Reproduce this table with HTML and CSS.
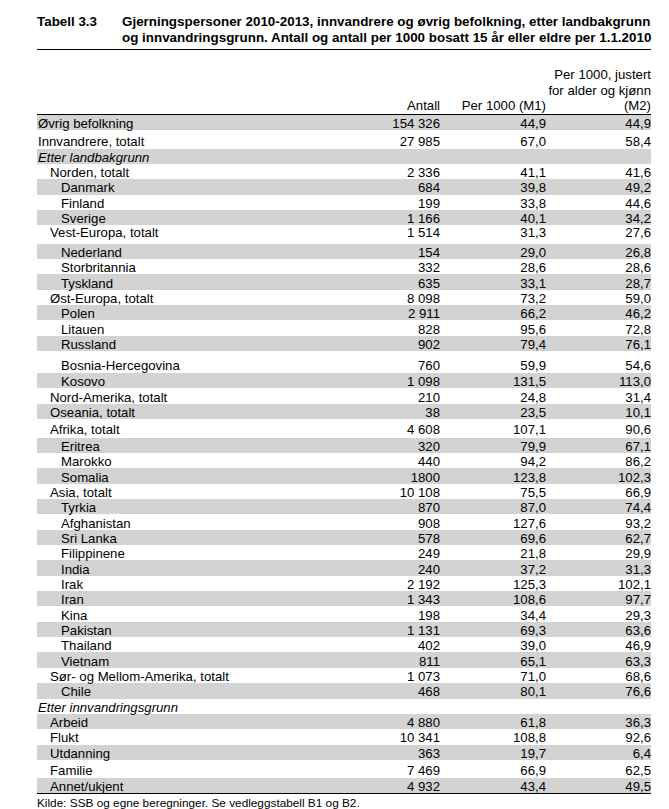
FILE: index.html
```html
<!DOCTYPE html>
<html lang="no">
<head>
<meta charset="utf-8">
<title>Tabell 3.3</title>
<link rel="stylesheet" href="styles.css">
</head>
<body>
<div class="page">
  <div class="title">
    <div class="title-num">Tabell 3.3</div>
    <div class="title-text">Gjerningspersoner 2010-2013, innvandrere og øvrig befolkning, etter landbakgrunn<br>og innvandringsgrunn. Antall og antall per 1000 bosatt 15 år eller eldre per 1.1.2010</div>
  </div>
  <table class="data">
    <colgroup>
      <col class="c-label"><col class="c-antall"><col class="c-m1"><col class="c-m2">
    </colgroup>
    <thead>
      <tr>
        <th class="lab"></th>
        <th>Antall</th>
        <th>Per 1000 (M1)</th>
        <th>Per 1000, justert<br>for alder og kjønn<br>(M2)</th>
      </tr>
    </thead>
    <tbody>
      <tr class="sh r15"><td class="l0">Øvrig befolkning</td><td>154 326</td><td>44,9</td><td>44,9</td></tr>
      <tr class="tall-b h185"><td class="l0">Innvandrere, totalt</td><td>27 985</td><td>67,0</td><td>58,4</td></tr>
      <tr class="sh"><td class="l0 it">Etter landbakgrunn</td><td></td><td></td><td></td></tr>
      <tr><td class="l1">Norden, totalt</td><td>2 336</td><td>41,1</td><td>41,6</td></tr>
      <tr class="sh"><td class="l2">Danmark</td><td>684</td><td>39,8</td><td>49,2</td></tr>
      <tr><td class="l2">Finland</td><td>199</td><td>33,8</td><td>44,6</td></tr>
      <tr class="sh"><td class="l2">Sverige</td><td>1 166</td><td>40,1</td><td>34,2</td></tr>
      <tr class="tall-t h185"><td class="l1">Vest-Europa, totalt</td><td>1 514</td><td>31,3</td><td>27,6</td></tr>
      <tr class="sh"><td class="l2">Nederland</td><td>154</td><td>29,0</td><td>26,8</td></tr>
      <tr><td class="l2">Storbritannia</td><td>332</td><td>28,6</td><td>28,6</td></tr>
      <tr class="sh"><td class="l2">Tyskland</td><td>635</td><td>33,1</td><td>28,7</td></tr>
      <tr><td class="l1">Øst-Europa, totalt</td><td>8 098</td><td>73,2</td><td>59,0</td></tr>
      <tr class="sh"><td class="l2">Polen</td><td>2 911</td><td>66,2</td><td>46,2</td></tr>
      <tr><td class="l2">Litauen</td><td>828</td><td>95,6</td><td>72,8</td></tr>
      <tr class="sh"><td class="l2">Russland</td><td>902</td><td>79,4</td><td>76,1</td></tr>
      <tr class="tall-b h22"><td class="l2">Bosnia-Hercegovina</td><td>760</td><td>59,9</td><td>54,6</td></tr>
      <tr class="sh"><td class="l2">Kosovo</td><td>1 098</td><td>131,5</td><td>113,0</td></tr>
      <tr><td class="l1">Nord-Amerika, totalt</td><td>210</td><td>24,8</td><td>31,4</td></tr>
      <tr class="sh"><td class="l1">Oseania, totalt</td><td>38</td><td>23,5</td><td>10,1</td></tr>
      <tr class="h185"><td class="l1">Afrika, totalt</td><td>4 608</td><td>107,1</td><td>90,6</td></tr>
      <tr class="sh"><td class="l2">Eritrea</td><td>320</td><td>79,9</td><td>67,1</td></tr>
      <tr><td class="l2">Marokko</td><td>440</td><td>94,2</td><td>86,2</td></tr>
      <tr class="sh"><td class="l2">Somalia</td><td>1800</td><td>123,8</td><td>102,3</td></tr>
      <tr><td class="l1">Asia, totalt</td><td>10 108</td><td>75,5</td><td>66,9</td></tr>
      <tr class="sh"><td class="l2">Tyrkia</td><td>870</td><td>87,0</td><td>74,4</td></tr>
      <tr><td class="l2">Afghanistan</td><td>908</td><td>127,6</td><td>93,2</td></tr>
      <tr class="sh"><td class="l2">Sri Lanka</td><td>578</td><td>69,6</td><td>62,7</td></tr>
      <tr><td class="l2">Filippinene</td><td>249</td><td>21,8</td><td>29,9</td></tr>
      <tr class="sh"><td class="l2">India</td><td>240</td><td>37,2</td><td>31,3</td></tr>
      <tr><td class="l2">Irak</td><td>2 192</td><td>125,3</td><td>102,1</td></tr>
      <tr class="sh"><td class="l2">Iran</td><td>1 343</td><td>108,6</td><td>97,7</td></tr>
      <tr><td class="l2">Kina</td><td>198</td><td>34,4</td><td>29,3</td></tr>
      <tr class="sh"><td class="l2">Pakistan</td><td>1 131</td><td>69,3</td><td>63,6</td></tr>
      <tr><td class="l2">Thailand</td><td>402</td><td>39,0</td><td>46,9</td></tr>
      <tr class="sh"><td class="l2">Vietnam</td><td>811</td><td>65,1</td><td>63,3</td></tr>
      <tr><td class="l1">Sør- og Mellom-Amerika, totalt</td><td>1 073</td><td>71,0</td><td>68,6</td></tr>
      <tr class="sh"><td class="l2">Chile</td><td>468</td><td>80,1</td><td>76,6</td></tr>
      <tr><td class="l0 it">Etter innvandringsgrunn</td><td></td><td></td><td></td></tr>
      <tr class="sh"><td class="l1">Arbeid</td><td>4 880</td><td>61,8</td><td>36,3</td></tr>
      <tr><td class="l1">Flukt</td><td>10 341</td><td>108,8</td><td>92,6</td></tr>
      <tr class="sh"><td class="l1">Utdanning</td><td>363</td><td>19,7</td><td>6,4</td></tr>
      <tr class="tall-b h185"><td class="l1">Familie</td><td>7 469</td><td>66,9</td><td>62,5</td></tr>
      <tr class="sh r15 last"><td class="l1">Annet/ukjent</td><td>4 932</td><td>43,4</td><td>49,5</td></tr>
    </tbody>
  </table>
  <p class="source">Kilde: SSB og egne beregninger. Se vedleggstabell B1 og B2.</p>
</div>
</body>
</html>
```
FILE: styles.css
```css
html, body {
  margin: 0;
  padding: 0;
  background: #fff;
}

body {
  font-family: "Liberation Sans", Arial, sans-serif;
  font-size: 13.2px;
  color: #000;
}

.page {
  width: 614px;
  padding: 14px 0 0 37px;
}

.title {
  display: flex;
  font-weight: bold;
  font-size: 13.4px;
  line-height: 16px;
  padding-bottom: 3px;
  border-bottom: 1px solid #000;
}

.title-num {
  width: 85px;
  flex: none;
}

.title-text {
  flex: 1;
  white-space: nowrap;
}

.data {
  width: 614px;
  border-collapse: collapse;
  table-layout: fixed;
}

.c-antall { width: 90px; }
.c-m1 { width: 106px; }
.c-m2 { width: 105px; }

.data th {
  font-weight: normal;
  text-align: right;
  vertical-align: bottom;
  line-height: 15.7px;
  padding: 0;
  height: 64px;
  border-bottom: 1px solid #000;
  white-space: nowrap;
}

.data td {
  padding: 3px 0 0 0;
  text-align: right;
  line-height: 12px;
  white-space: nowrap;
  vertical-align: middle;
}

.data td:first-child {
  text-align: left;
}

.data tbody tr {
  height: 15.35px;
}

.data tr.r15 { height: 15px; }
.data tr.h185 { height: 18.5px; }
.data tr.h22 { height: 22px; }

.data tr.tall-b td {
  vertical-align: bottom;
  padding-top: 0;
  padding-bottom: 1px;
}

.data tr.tall-t td {
  vertical-align: top;
  padding-top: 2px;
}

.data tr.sh td {
  background: #d3d3d3;
}

.data tr.last td {
  border-bottom: 1px solid #000;
}

.l0 { padding-left: 1px !important; }
.l1 { padding-left: 13px !important; }
.l2 { padding-left: 24px !important; }

.it { font-style: italic; }

.source {
  margin: 2px 0 0 0;
  font-size: 11.8px;
  line-height: 14px;
}
```
